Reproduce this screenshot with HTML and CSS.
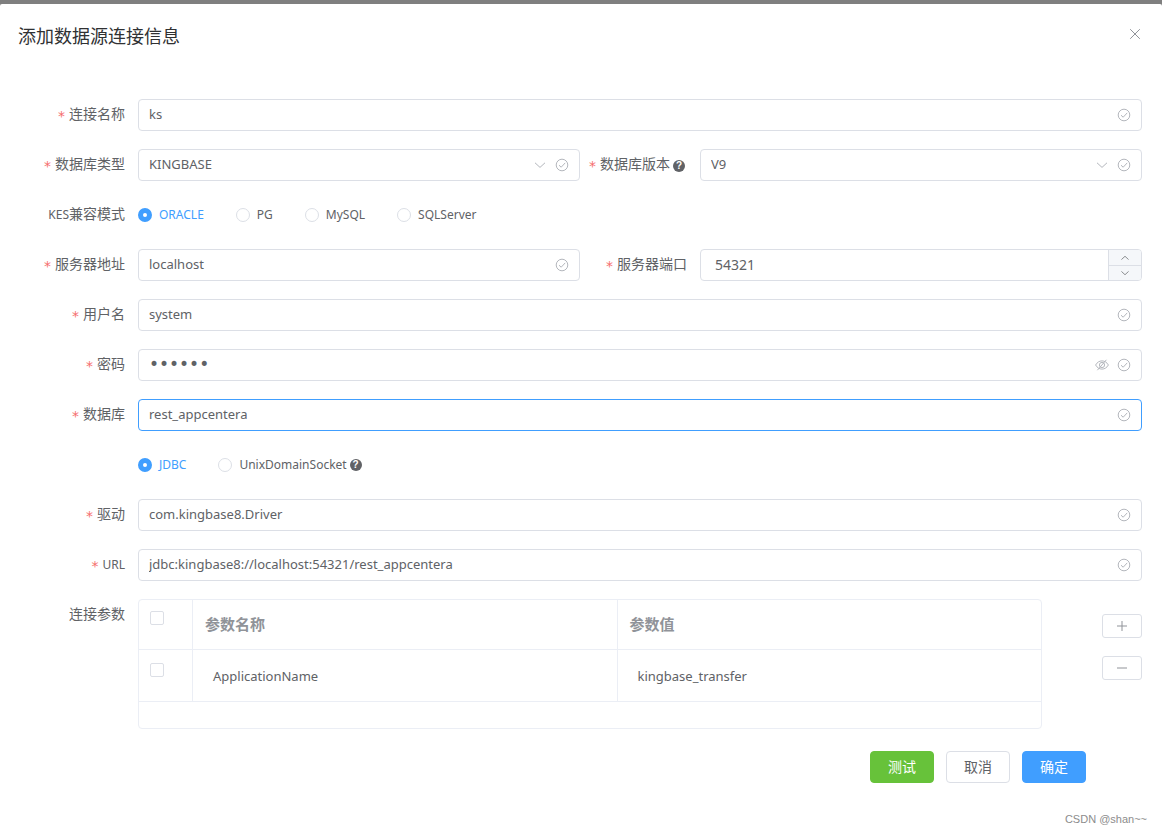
FILE: index.html
```html
<!DOCTYPE html>
<html lang="zh-CN">
<head>
<meta charset="utf-8">
<meta name="viewport" content="width=device-width, initial-scale=1">
<title>添加数据源连接信息</title>
<link rel="stylesheet" href="styles.css">
</head>
<body>
<svg class="sprite" aria-hidden="true">
  <symbol id="i-ok" viewBox="0 0 14 14"><circle cx="7" cy="7" r="5.8"/><path d="M4 7.2 6.2 9.2 10.2 4.9"/></symbol>
  <symbol id="i-down" viewBox="0 0 14 14"><path d="M2 4.8 7 9.4 12 4.8"/></symbol>
  <symbol id="i-up" viewBox="0 0 14 14"><path d="M2 9.2 7 4.6 12 9.2"/></symbol>
  <symbol id="i-close" viewBox="0 0 14 14"><path d="M2.2 2.2 11.8 11.8M11.8 2.2 2.2 11.8"/></symbol>
  <symbol id="i-plus" viewBox="0 0 14 14"><path d="M7 2V12M2 7H12"/></symbol>
  <symbol id="i-minus" viewBox="0 0 14 14"><path d="M2 7H12"/></symbol>
  <symbol id="i-eye" viewBox="0 0 14 14"><path d="M.6 7C2.2 4.200 4.500 2.900 7 2.900S11.800 4.200 13.400 7C11.800 9.800 9.500 11.100 7 11.100S2.200 9.800 .6 7Z"/><circle cx="7" cy="7" r="2.600"/><path d="M2.400 12.200 11.400 1.800"/></symbol>
</svg>
<main class="dialog">
  <header class="dialog-header">
    <h1 class="title">添加数据源连接信息</h1>
    <button class="close" type="button" aria-label="关闭"><svg class="icon"><use href="#i-close"/></svg></button>
  </header>
  <form class="form">
    <div class="item">
      <label class="label required" for="name">连接名称</label>
      <div class="field"><input class="text" id="name" type="text" value="ks"><svg class="icon"><use href="#i-ok"/></svg></div>
    </div>
    <div class="pair">
      <div class="item">
        <label class="label required" for="dbtype">数据库类型</label>
        <div class="field"><select class="text" id="dbtype"><option>KINGBASE</option></select><svg class="icon"><use href="#i-down"/></svg><svg class="icon"><use href="#i-ok"/></svg></div>
      </div>
      <div class="item">
        <label class="label required" for="dbver">数据库版本<span class="help">?</span></label>
        <div class="field"><select class="text" id="dbver"><option>V9</option></select><svg class="icon"><use href="#i-down"/></svg><svg class="icon"><use href="#i-ok"/></svg></div>
      </div>
    </div>
    <div class="item" role="radiogroup" aria-labelledby="mode">
      <span class="label" id="mode"><span class="latin">KES</span>兼容模式</span>
      <div class="radios">
        <label class="radio"><input type="radio" name="mode" checked><span>ORACLE</span></label>
        <label class="radio"><input type="radio" name="mode"><span>PG</span></label>
        <label class="radio"><input type="radio" name="mode"><span>MySQL</span></label>
        <label class="radio"><input type="radio" name="mode"><span>SQLServer</span></label>
      </div>
    </div>
    <div class="pair">
      <div class="item">
        <label class="label required" for="host">服务器地址</label>
        <div class="field"><input class="text" id="host" type="text" value="localhost"><svg class="icon"><use href="#i-ok"/></svg></div>
      </div>
      <div class="item">
        <label class="label required" for="port">服务器端口</label>
        <div class="field number"><input class="text" id="port" type="text" inputmode="numeric" value="54321">
          <div class="steps">
            <button type="button" aria-label="增加"><svg class="icon"><use href="#i-up"/></svg></button>
            <button type="button" aria-label="减少"><svg class="icon"><use href="#i-down"/></svg></button>
          </div>
        </div>
      </div>
    </div>
    <div class="item">
      <label class="label required" for="user">用户名</label>
      <div class="field"><input class="text" id="user" type="text" value="system"><svg class="icon"><use href="#i-ok"/></svg></div>
    </div>
    <div class="item">
      <label class="label required" for="pwd">密码</label>
      <div class="field"><input class="text secret" id="pwd" type="password" value="system"><svg class="icon"><use href="#i-eye"/></svg><svg class="icon"><use href="#i-ok"/></svg></div>
    </div>
    <div class="item">
      <label class="label required" for="db">数据库</label>
      <div class="field active"><input class="text" id="db" type="text" value="rest_appcentera"><svg class="icon"><use href="#i-ok"/></svg></div>
    </div>
    <div class="item" role="radiogroup" aria-label="连接方式">
      <span class="label"></span>
      <div class="radios">
        <label class="radio"><input type="radio" name="conn" checked><span>JDBC</span></label>
        <label class="radio"><input type="radio" name="conn"><span>UnixDomainSocket</span><span class="help">?</span></label>
      </div>
    </div>
    <div class="item">
      <label class="label required" for="driver">驱动</label>
      <div class="field"><input class="text" id="driver" type="text" value="com.kingbase8.Driver"><svg class="icon"><use href="#i-ok"/></svg></div>
    </div>
    <div class="item">
      <label class="label required" for="url"><span class="latin">URL</span></label>
      <div class="field"><input class="text" id="url" type="text" value="jdbc:kingbase8://localhost:54321/rest_appcentera"><svg class="icon"><use href="#i-ok"/></svg></div>
    </div>
    <div class="item">
      <span class="label">连接参数</span>
      <div class="params">
        <div class="table-box">
          <table class="table">
            <thead><tr><th class="check"><input type="checkbox" aria-label="全选"></th><th>参数名称</th><th>参数值</th></tr></thead>
            <tbody><tr><td class="check"><input type="checkbox" aria-label="选择 ApplicationName"></td><td>ApplicationName</td><td>kingbase_transfer</td></tr></tbody>
          </table>
        </div>
        <div class="tools">
          <button type="button" class="tool" aria-label="添加"><svg class="icon"><use href="#i-plus"/></svg></button>
          <button type="button" class="tool" aria-label="删除"><svg class="icon"><use href="#i-minus"/></svg></button>
        </div>
      </div>
    </div>
    <div class="actions">
      <button type="button" class="btn success">测试</button>
      <button type="button" class="btn">取消</button>
      <button type="button" class="btn primary">确定</button>
    </div>
  </form>
  <footer class="credit">CSDN @shan~~</footer>
</main>
</body>
</html>
```
FILE: styles.css
```css
* { box-sizing: border-box; }
body {
  margin: 0;
  padding-top: 4px;
  background: #7f7f7f;
  color: #606266;
  font: 14px/32px "Noto Sans CJK SC", sans-serif;
}
button, input, select { font: inherit; color: inherit; margin: 0; }
button { padding: 0; cursor: pointer; }
.sprite { display: none; }
.icon {
  width: 14px;
  height: 14px;
  flex: none;
  fill: none;
  stroke: currentColor;
  stroke-width: 1;
}
.dialog {
  min-height: calc(100vh - 4px);
  padding: 16px 20px 0 18px;
  background: #fff;
  border-radius: 2px 2px 0 0;
}
.dialog-header {
  display: flex;
  justify-content: space-between;
  align-items: flex-start;
  height: 79px;
}
.title {
  margin: 0;
  color: #303133;
  font-size: 18px;
  font-weight: 400;
  line-height: 30px;
}
.close {
  display: flex;
  padding: 7px 0;
  border: 0;
  background: none;
  color: #909399;
}
.form { display: flex; flex-direction: column; gap: 18px; }
.pair { display: grid; grid-template-columns: 1fr 1fr; }
.item { display: flex; min-width: 0; }
.label {
  flex: none;
  display: flex;
  justify-content: flex-end;
  align-items: center;
  width: 120px;
  height: 32px;
  padding: 0 13px 4px 0;
}
.required::before {
  content: "*";
  margin-right: 4px;
  padding-top: 6px;
  color: #f56c6c;
  font-family: "DejaVu Sans", sans-serif;
}
.latin, .radio { font-family: "Noto Sans", sans-serif; font-size: 12px; }
.latin { padding-top: 3px; }
.help {
  display: grid;
  place-items: center;
  width: 12px;
  height: 12px;
  margin: 5px 2px 0 3px;
  border-radius: 50%;
  background: #606266;
  color: #fff;
  font: bold 10px/12px "Liberation Sans", sans-serif;
}
.field {
  flex: 1;
  display: flex;
  align-items: center;
  gap: 8px;
  min-width: 0;
  height: 32px;
  padding-right: 10px;
  border: 1px solid #dcdfe6;
  border-radius: 4px;
  color: #b4b7bd;
}
.field.active { border-color: #409eff; }
.text {
  flex: 1;
  min-width: 0;
  height: 30px;
  padding: 0 0 2px 10px;
  border: 0;
  outline: 0;
  background: none;
  appearance: none;
  color: #606266;
  font: 13px/20px "Noto Sans", sans-serif;
}
.secret { font: 17px/20px "DejaVu Sans", sans-serif; }
.number { padding-right: 0; }
.number .text { padding-left: 14px; font-size: 14px; }
.steps {
  flex: none;
  display: grid;
  grid-template-rows: 1fr 1fr;
  width: 33px;
  height: 30px;
  border-left: 1px solid #dcdfe6;
}
.steps button {
  display: grid;
  place-items: center;
  min-height: 0;
  border: 0;
  border-radius: 0 3px 0 0;
  background: #f5f7fa;
  color: #606266;
}
.steps button + button {
  border-top: 1px solid #dcdfe6;
  border-radius: 0 0 3px 0;
}
.steps .icon { width: 10px; height: 10px; }
.radios { display: flex; gap: 32px; height: 32px; }
.radio { display: flex; align-items: center; }
.radio input {
  appearance: none;
  width: 14px;
  height: 14px;
  margin-right: 7px;
  border: 1px solid #dcdfe6;
  border-radius: 50%;
  background: #fff;
}
.radio input:checked { border: 5px solid #409eff; }
.radio input:checked + span { color: #409eff; }
.radio .help { margin-top: 0; }
.params {
  flex: 1;
  display: flex;
  gap: 60px;
  min-width: 0;
}
.table-box {
  flex: 1;
  min-height: 130px;
  border: 1px solid #ebeef5;
  border-radius: 4px;
}
.table { width: 100%; border-collapse: separate; border-spacing: 0; table-layout: fixed; }
.table th, .table td {
  height: 50px;
  padding: 0 12px 2px;
  border-bottom: 1px solid #ebeef5;
  text-align: left;
}
.table td {
  height: 52px;
  padding: 0 20px;
  font-family: "Noto Sans", sans-serif;
  font-size: 13px;
}
.table th {
  color: #909399;
  font-size: 15px;
  font-weight: 700;
}
.table th + th, .table td + td { border-left: 1px solid #ebeef5; }
.table .check {
  width: 53px;
  padding: 11px 11px 0;
  vertical-align: top;
  line-height: 14px;
}
.table td.check { padding-top: 13px; }
.check input {
  display: block;
  appearance: none;
  width: 14px;
  height: 14px;
  border: 1px solid #dcdfe6;
  border-radius: 2px;
  background: #fff;
}
.tools {
  display: flex;
  flex-direction: column;
  gap: 18px;
  padding-top: 15px;
}
.tool {
  display: grid;
  place-items: center;
  width: 40px;
  height: 24px;
  border: 1px solid #dcdfe6;
  border-radius: 3px;
  background: #fff;
  color: #909399;
}
.actions {
  display: flex;
  justify-content: flex-end;
  gap: 12px;
  padding: 4px 56px 0 0;
}
.btn {
  width: 64px;
  height: 32px;
  padding-bottom: 2px;
  border: 1px solid #dcdfe6;
  border-radius: 4px;
  background: #fff;
  line-height: 28px;
}
.success { border-color: #67c23a; background: #67c23a; color: #fff; }
.primary { border-color: #409eff; background: #409eff; color: #fff; }
.credit {
  margin: 26px -5px 0 0;
  color: #8c8c8c;
  text-align: right;
  font: 11px/20px "Liberation Sans", sans-serif;
}
```
